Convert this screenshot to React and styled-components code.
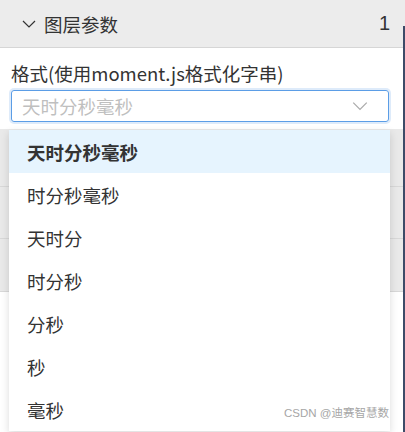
import React from 'react';
import styled, { createGlobalStyle } from 'styled-components';

const GlobalStyle = createGlobalStyle`
  html, body {
    margin: 0;
    padding: 0;
    background: #ffffff;
  }
  body {
    font-family: "Noto Sans CJK SC", "Noto Sans", sans-serif;
    color: #333;
  }
`;

const options = ['天时分秒毫秒', '时分秒毫秒', '天时分', '时分秒', '分秒', '秒', '毫秒'];

const Page = styled.div`
  position: relative;
  width: 405px;
  height: 432px;
  overflow: hidden;
  background: #fff;

  &::after {
    content: '';
    position: absolute;
    right: 0;
    top: 26px;
    bottom: 0;
    width: 2px;
    background: #3d4b68;
  }
`;

const Header = styled.div`
  height: 47px;
  display: flex;
  align-items: center;
  padding: 0 15px 0 21px;
  background: #ececec;
  border-bottom: 1px solid #d6d6d6;
  font-size: 18.5px;
  color: #333;
`;

const Arrow = styled.svg`
  margin-right: 7px;
`;

const Title = styled.span`
  flex: 1;
`;

const Count = styled.span`
  font-family: "Liberation Sans", sans-serif;
  font-size: 20px;
`;

const Body = styled.div`
  padding: 13px 16px 0 11px;
`;

const Label = styled.div`
  font-size: 18.5px;
  line-height: 24px;
  color: #333;
  margin-bottom: 5px;
`;

const SelectBox = styled.div`
  width: 378px;
  height: 32px;
  box-sizing: border-box;
  border: 1px solid #5b9de6;
  border-radius: 3px;
  box-shadow: 0 0 0 2px rgba(91, 157, 230, 0.2);
  display: flex;
  align-items: center;
  padding: 0 12px 0 10px;
`;

const Placeholder = styled.span`
  flex: 1;
  font-size: 18.5px;
  color: #bfbfbf;
`;

const Rows = styled.div`
  margin-top: 7px;
  margin-left: -11px;
  margin-right: -16px;
  display: flex;
  flex-direction: column;
`;

const Row = styled.div`
  height: ${p => p.$h}px;
  background: #e9e9e9;
  border-bottom: 1px solid #d8d8d8;
`;

const Menu = styled.ul`
  position: absolute;
  left: 9px;
  top: 130px;
  width: 381px;
  margin: 0;
  padding: 0;
  list-style: none;
  background: #fff;
  box-shadow: 0 3px 8px rgba(0, 0, 0, 0.15);
`;

const Item = styled.li`
  height: 43px;
  display: flex;
  align-items: center;
  padding-left: 18px;
  font-size: 18.5px;
  color: #333;
  font-weight: ${p => (p.$active ? 700 : 400)};
  background: ${p => (p.$active ? '#e6f4fe' : '#fff')};
`;

const Watermark = styled.span`
  position: absolute;
  right: 16px;
  bottom: 12px;
  font-size: 11.5px;
  color: #a6a6a6;
  font-family: "Liberation Sans", "Noto Sans CJK SC", sans-serif;
`;

const Chevron = ({ size = 16, color = '#333', width = 1.2 }) => (
  <Arrow viewBox="0 0 16 16" width={size} height={size}>
    <path d="M2 5 L8 11 L14 5" fill="none" stroke={color} strokeWidth={width} />
  </Arrow>
);

export default function App() {
  return (
    <>
      <GlobalStyle />
      <Page>
        <Header>
          <Chevron />
          <Title>图层参数</Title>
          <Count>1</Count>
        </Header>
        <Body>
          <Label>格式(使用moment.js格式化字串)</Label>
          <SelectBox>
            <Placeholder>天时分秒毫秒</Placeholder>
            <Chevron size={18} color="#aaa" width={1.1} />
          </SelectBox>
          <Rows>
            <Row $h={57} />
            <Row $h={51} />
            <Row $h={52} />
          </Rows>
        </Body>
        <Menu>
          {options.map((o, i) => (
            <Item key={o} $active={i === 0}>{o}</Item>
          ))}
        </Menu>
        <Watermark>CSDN @迪赛智慧数</Watermark>
      </Page>
    </>
  );
}
